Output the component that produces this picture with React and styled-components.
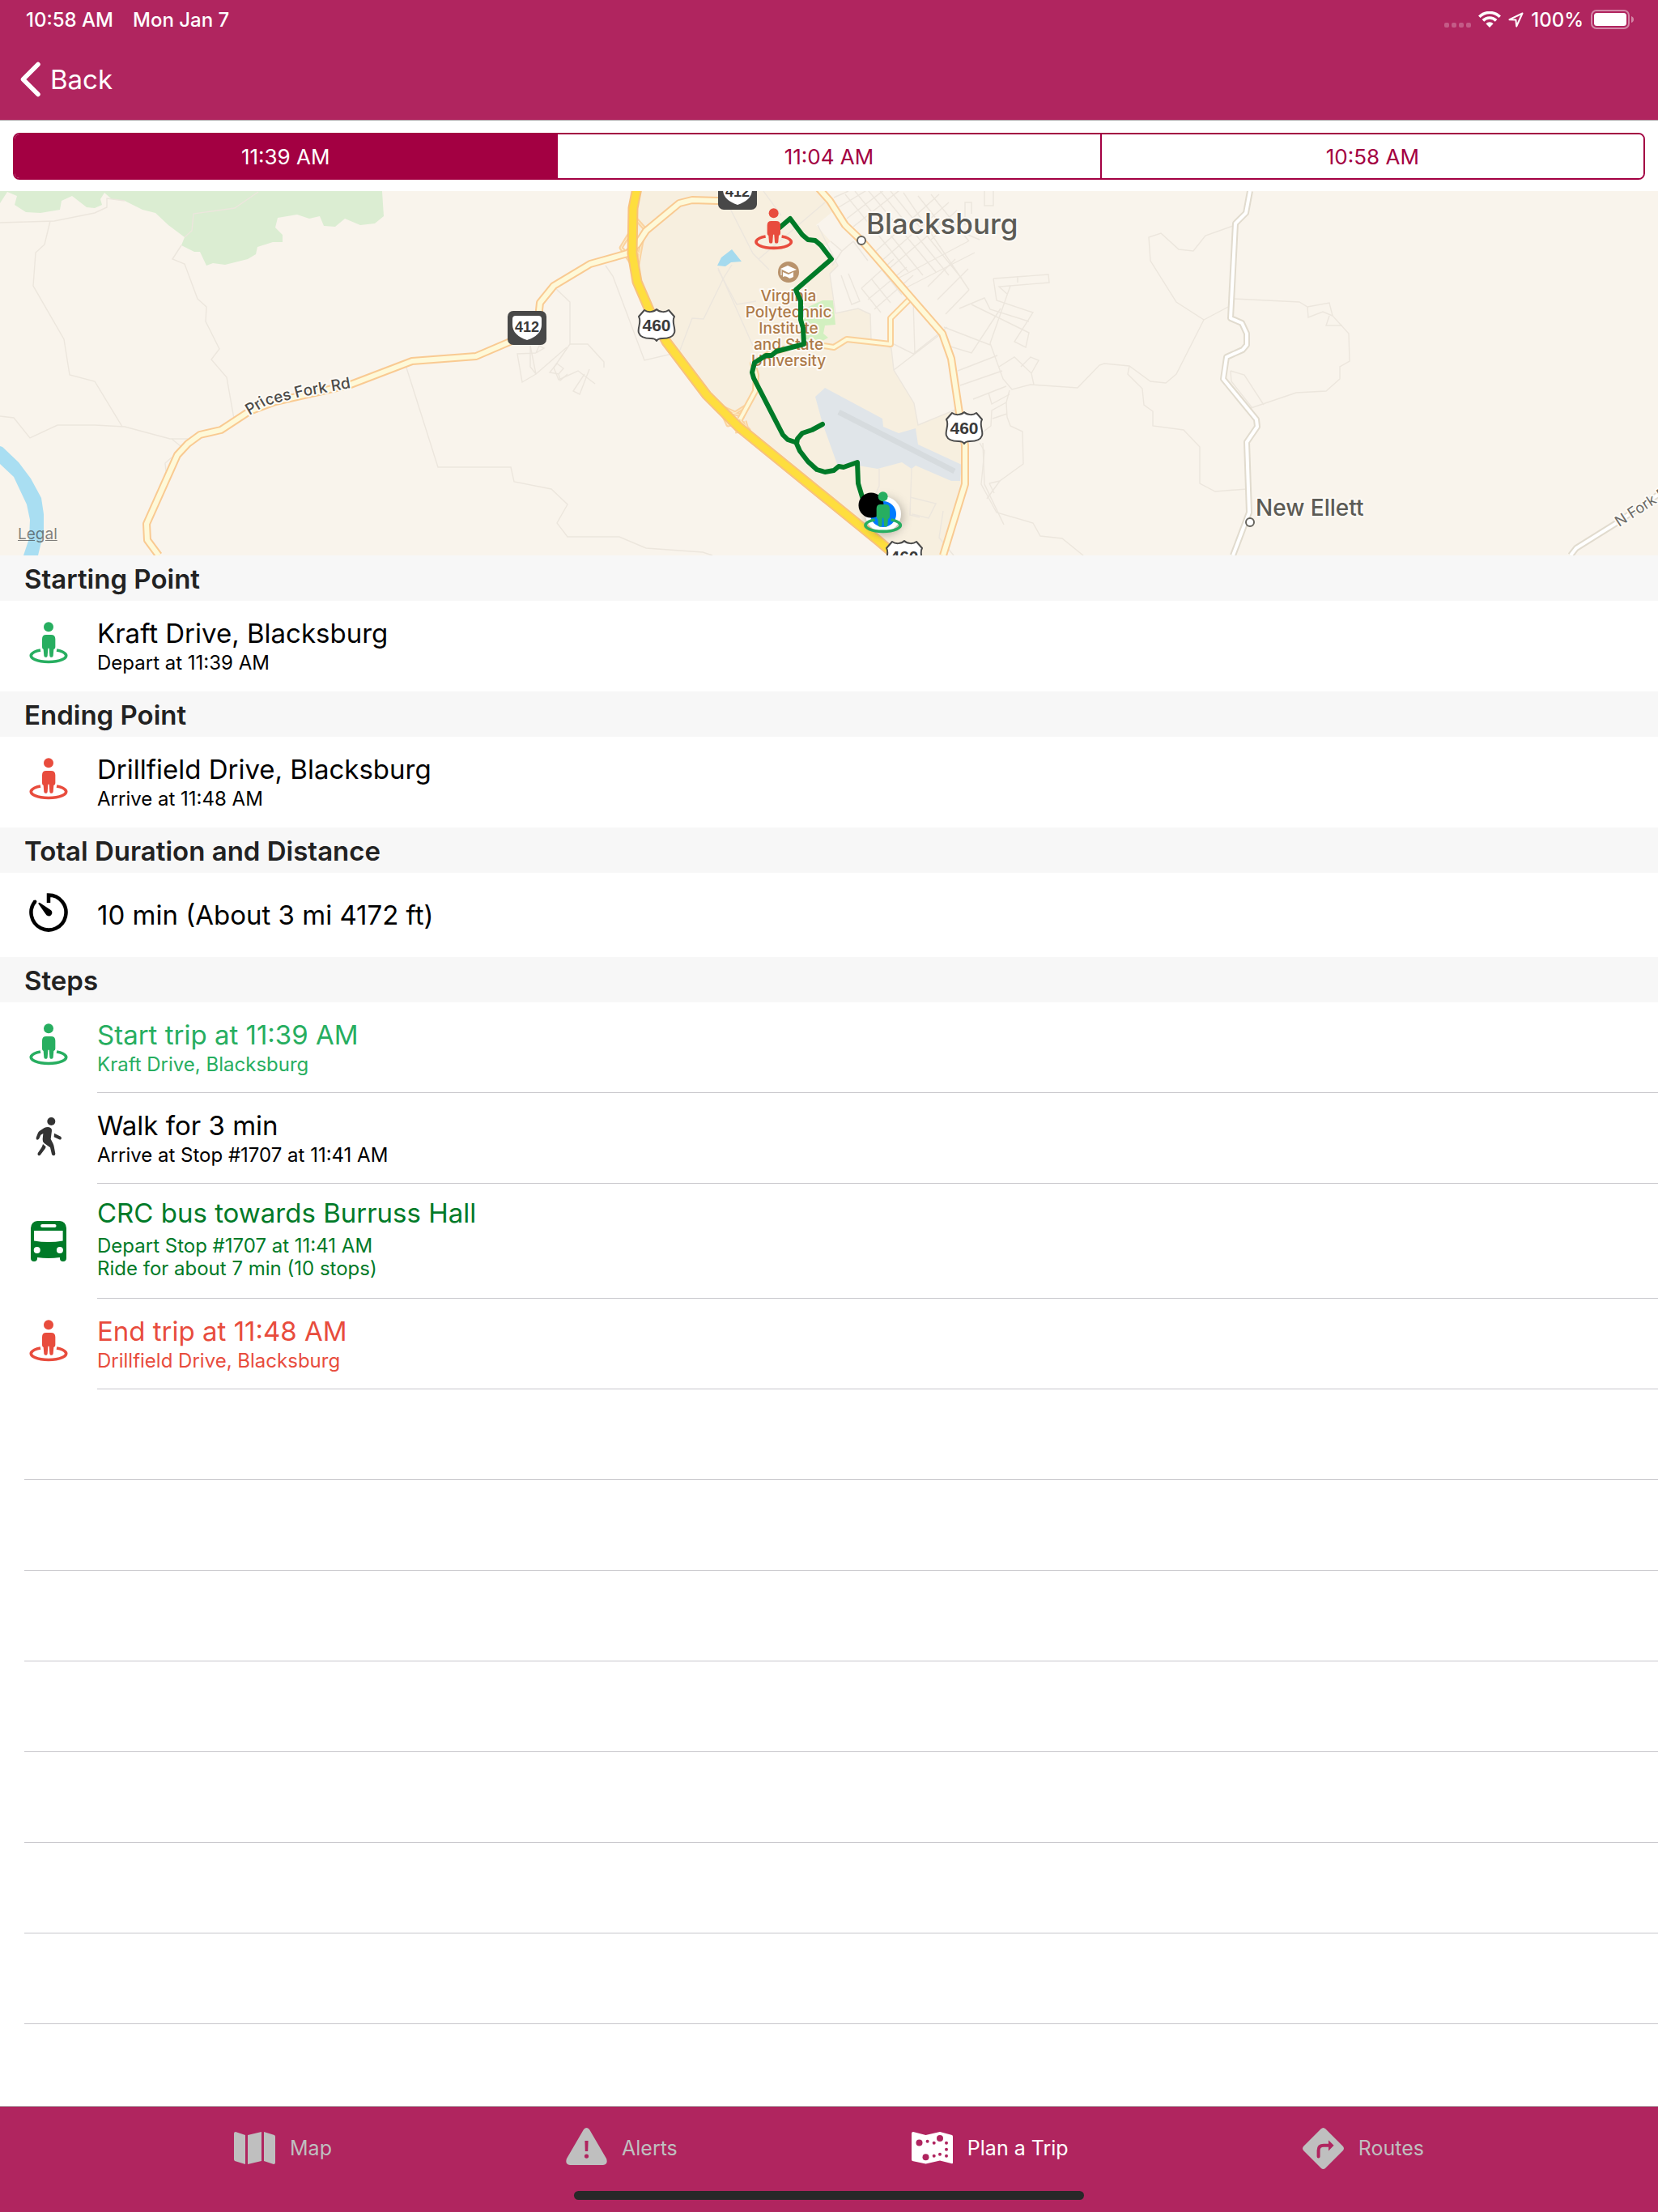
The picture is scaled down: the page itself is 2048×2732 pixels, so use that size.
import React, { useState } from "react";
import styled, { createGlobalStyle } from "styled-components";

const GlobalStyle = createGlobalStyle`
  * {
    box-sizing: border-box;
  }

  body {
    margin: 0;
    background-color: #fff;
    color: #000;
    font-family: Inter, "Liberation Sans", sans-serif;
  }
`;

const Page = styled.div`
  display: flex;
  flex-direction: column;
  min-height: 100vh;
`;

/* ---------- header ---------- */

const Header = styled.header`
  background-color: #b0255f;
  border-bottom: 1px solid #b2a6ab;
  color: #fff;
`;

const StatusBar = styled.div`
  display: flex;
  align-items: center;
  justify-content: space-between;
  height: 48px;
  padding: 0 30px 0 32px;
  font-size: 24px;
  font-weight: 500;
`;

const StatusGroup = styled.div`
  display: flex;
  align-items: center;
  gap: ${(props) => props.$gap}px;
`;

const NavBar = styled.nav`
  display: flex;
  align-items: center;
  height: 100px;
  padding: 0 25px;
`;

const BackButton = styled.button`
  display: flex;
  align-items: center;
  gap: 12px;
  padding: 0;
  border: 0;
  background: none;
  color: inherit;
  font: inherit;
  font-size: 33px;
  cursor: pointer;
`;

/* ---------- departure picker ---------- */

const Segments = styled.div`
  display: flex;
  margin: 15px 16px 14px;
  height: 58px;
  border: 2px solid #a30042;
  border-radius: 8px;
  overflow: hidden;
`;

const Segment = styled.button`
  flex: 1;
  border: 0;
  background-color: ${(props) => (props.$active ? "#a30042" : "#fff")};
  color: ${(props) => (props.$active ? "#fff" : "#a30042")};
  font: inherit;
  font-size: 26px;
  cursor: pointer;

  & + & {
    border-left: 2px solid #a30042;
  }
`;

/* ---------- map ---------- */

const MapFrame = styled.section`
  position: relative;
  height: 450px;
  overflow: hidden;
  background-color: #f9f4ec;

  svg.map {
    display: block;
    width: 100%;
    height: 100%;
  }
`;

const LegalLink = styled.a`
  position: absolute;
  left: 22px;
  bottom: 14px;
  color: rgba(60, 60, 60, 0.65);
  font-size: 19px;
  line-height: 24px;
`;

const MapLabel = styled.text`
  font-family: Inter, "Liberation Sans", sans-serif;
  font-size: ${(props) => props.$size}px;
  font-weight: ${(props) => props.$weight || 500};
  fill: ${(props) => props.$color || "#5c5b55"};
  stroke: #fdfaf5;
  stroke-width: 4px;
  stroke-linejoin: round;
  paint-order: stroke;
`;

const ShieldNumber = styled.text`
  font-family: "Liberation Sans", sans-serif;
  font-size: ${(props) => props.$size}px;
  font-weight: 700;
  text-anchor: middle;
  fill: #3a3a3a;
`;

/* ---------- trip list ---------- */

const Main = styled.main`
  flex: 1;
`;

const SectionTitle = styled.h2`
  margin: 0;
  padding: 1px 30px 0;
  height: 56px;
  background-color: #f7f7f7;
  color: #222;
  font-size: 33px;
  font-weight: 600;
  line-height: 56px;
`;

const List = styled.ul`
  margin: 0;
  padding: 0;
  list-style: none;
`;

const Item = styled.li`
  display: flex;
  min-height: ${(props) => props.$height}px;
  color: ${(props) => props.$color || "#000"};
`;

const IconCell = styled.div`
  display: flex;
  flex: none;
  align-items: center;
  justify-content: center;
  width: 120px;
`;

const ItemBody = styled.div`
  display: flex;
  flex: 1;
  flex-direction: column;
  justify-content: center;
  gap: ${(props) => (props.$tall ? 7 : 3)}px;
  padding-bottom: ${(props) => (props.$tall ? 6 : 0)}px;
  border-bottom: 1px solid ${(props) => (props.$line ? "#c8c7cc" : "transparent")};
`;

const ItemTitle = styled.div`
  font-size: 33px;
  line-height: 40px;
`;

const ItemDetail = styled.div`
  font-size: 24px;
  line-height: 28px;
`;

const EmptyRow = styled.div`
  height: 112px;
  margin-left: 30px;
  border-bottom: 1px solid #c8c7cc;
`;

/* ---------- tab bar ---------- */

const TabBar = styled.footer`
  display: flex;
  flex-direction: column;
  align-items: center;
  justify-content: space-between;
  height: 131px;
  padding-bottom: 15px;
  border-top: 1px solid #b2a6ab;
  background-color: #b0255f;
`;

const Tabs = styled.nav`
  display: flex;
  align-items: center;
  justify-content: space-evenly;
  width: 100%;
  height: 102px;
`;

const Tab = styled.a`
  display: flex;
  align-items: center;
  gap: 18px;
  color: ${(props) => (props.$active ? "#fff" : "#bfbfbf")};
  font-size: 25px;
  text-decoration: none;
`;

const HomeIndicator = styled.div`
  width: 630px;
  max-width: 60%;
  height: 11px;
  border-radius: 6px;
  background-color: #282828;
`;

/* ---------- icons ---------- */

const PersonShape = () => (
  <g fill="currentColor">
    <circle cx="71" cy="19" r="18" />
    <path d="M62 48H80Q96 48 96 64V94Q96 101 90 102L88 126Q87 131 83 131H79Q76 131 75 126L73 98H69L67 126Q66 131 63 131H59Q55 131 54 126L52 102Q47 101 47 94V64Q47 48 62 48Z" />
    <path
      d="M41 105A65 23 0 1 0 101 105"
      fill="none"
      stroke="currentColor"
      strokeWidth="11"
    />
  </g>
);

const PersonIcon = () => (
  <svg width="48" height="60" viewBox="-1 0 144 180" aria-hidden="true">
    <PersonShape />
  </svg>
);

const TimerIcon = () => (
  <svg width="48" height="54" viewBox="0 0 48 54" aria-hidden="true">
    <path
      d="M24 12V2.5A21.5 21.5 0 1 1 7.5 10.2"
      fill="none"
      stroke="#000"
      strokeWidth="4.5"
      strokeLinecap="butt"
      strokeLinejoin="miter"
    />
    <circle cx="7.3" cy="10.6" r="2.1" />
    <path d="M11.5 12.2Q12.5 11.4 14 12.4L26 20.4A4.2 4.2 0 1 1 20.4 26L12 14Q11 13 11.5 12.2Z" />
  </svg>
);

const WalkIcon = () => (
  <svg width="33" height="52" viewBox="0 0 99 156" aria-hidden="true">
    <g fill="#333">
      <circle cx="58" cy="15" r="15" />
      <path d="M2 75L9 57Q11 52 15 50L32 39Q38 36 46 36Q61 38 60 50L56 80L64 96Q67 102 68 108L73 134Q73 141 68 142Q62 142 60 137L54 112L32 96Q25 90 26 81L28 60L19 65L13 79Q10 84 5 83Q1 81 2 75Z" />
      <path d="M27 99L38 109Q37 113 35 116L18 139Q15 143 10 141Q6 139 8 133L22 112Q25 107 27 99Z" />
      <path d="M69 59L93 71Q98 75 95 80Q92 84 87 82L68 73Z" />
    </g>
  </svg>
);

const BusIcon = () => (
  <svg width="44" height="50" viewBox="0 0 131 149" aria-hidden="true">
    <path
      fill="currentColor"
      fillRule="evenodd"
      d="M24 0H107Q129 2 131 26V137Q131 149 119 149T107 137V134Q65 140 24 134V137Q24 149 12 149T0 137V26Q2 2 24 0ZM42 12Q36 12 36 18T42 24H88Q94 24 94 18T88 12ZM12 36V73Q65 82 118 73V36ZM23 95A12 12 0 1 0 23 119A12 12 0 1 0 23 95ZM107 95A12 12 0 1 0 107 119A12 12 0 1 0 107 95Z"
    />
  </svg>
);

const MapTabIcon = () => (
  <svg width="51" height="40" viewBox="0 0 51 40" fill="currentColor" aria-hidden="true">
    <path d="M0 2Q0 0 2 0L14 4V40L1 36Q0 35 0 34Z" />
    <path d="M17 4L34 0V36L17 40Z" />
    <path d="M37 0L50 4Q51 5 51 6V38Q51 40 49 40L37 36Z" />
  </svg>
);

const AlertsTabIcon = () => (
  <svg width="51" height="50" viewBox="0 0 51 50" fill="currentColor" aria-hidden="true">
    <path
      fillRule="evenodd"
      d="M22 2Q25.5 -2 29 2L50 38Q52.5 45 46 46H5Q-1.5 45 1 38ZM23.4 16L23.8 29H27.2L27.6 16ZM25.5 32.5A2.6 2.6 0 1 0 25.5 37.7A2.6 2.6 0 1 0 25.5 32.5Z"
    />
  </svg>
);

const TRIP_DOTS = [
  [9.5, 13.5, 4],
  [19.6, 11.7, 2],
  [27.7, 13.7, 2],
  [35, 8, 4],
  [43, 13.7, 2],
  [43, 21.7, 2],
  [43, 29.7, 2],
  [35, 27.7, 2],
  [27.7, 29.7, 2],
  [17.5, 31.3, 4],
];

const TripTabIcon = () => (
  <svg width="51" height="40" viewBox="0 0 51 40" fill="currentColor" aria-hidden="true">
    <path d="M0 2Q0 0 2 0L17.5 4L35 0L50 4Q51 4.5 51 6V38Q51 40 49 39L35 35.5L17.5 39.5L1 36Q0 35.5 0 34Z" />
    {TRIP_DOTS.map(([cx, cy, r]) => (
      <circle key={`${cx}-${cy}`} cx={cx} cy={cy} r={r} fill="#b0255f" />
    ))}
  </svg>
);

const RoutesTabIcon = () => (
  <svg width="51" height="51" viewBox="0 0 51 51" fill="currentColor" aria-hidden="true">
    <path d="M22.5 1.5Q25.5 -1.5 28.5 1.5L49.5 22.5Q52.5 25.5 49.5 28.5L28.5 49.5Q25.5 52.5 22.5 49.5L1.5 28.5Q-1.5 25.5 1.5 22.5Z" />
    <path
      d="M19.6 35.5V28Q19.6 21.8 26 21.8H32"
      fill="none"
      stroke="#b0255f"
      strokeWidth="4"
      strokeLinecap="round"
    />
    <path d="M32 15.3L38.6 21.8L32 28.5Z" fill="#b0255f" />
  </svg>
);

const ChevronIcon = () => (
  <svg width="25" height="44" viewBox="0 0 25 44" aria-hidden="true">
    <path
      d="M22 3.5L3.5 22L22 40.5"
      fill="none"
      stroke="#fff"
      strokeWidth="5.5"
      strokeLinecap="round"
      strokeLinejoin="round"
    />
  </svg>
);

const SignalIcon = () => (
  <svg width="33" height="20" viewBox="0 0 33 20" fill="#fff" fillOpacity="0.25" aria-hidden="true">
    <rect x="0" y="14" width="6" height="6" rx="2" />
    <rect x="9" y="14" width="6" height="6" rx="2" />
    <rect x="18" y="14" width="6" height="6" rx="2" />
    <rect x="27" y="14" width="6" height="6" rx="2" />
  </svg>
);

const WifiIcon = () => (
  <svg width="28" height="20" viewBox="0 0 28 20" aria-hidden="true">
    <g fill="none" stroke="#fff" strokeWidth="3.6">
      <path d="M1.3 6.8A18 18 0 0 1 26.7 6.8" />
      <path d="M5.9 11.4A11.5 11.5 0 0 1 22.1 11.4" />
    </g>
    <path d="M14 20L9.4 15.2A6.5 6.5 0 0 1 18.6 15.2Z" fill="#fff" />
  </svg>
);

const LocationIcon = () => (
  <svg width="19" height="19" viewBox="0 0 19 19" aria-hidden="true">
    <path
      d="M17.5 1.5L1.5 9.2L9.4 9.6L10.2 17.5Z"
      fill="none"
      stroke="#fff"
      strokeWidth="2"
      strokeLinejoin="round"
    />
  </svg>
);

const BatteryIcon = () => (
  <svg width="53" height="24" viewBox="0 0 53 24" aria-hidden="true">
    <rect x="1" y="1" width="46" height="22" rx="6" fill="none" stroke="#fff" strokeOpacity="0.45" strokeWidth="2" />
    <rect x="4" y="4" width="40" height="16" rx="3.5" fill="#fff" />
    <path d="M50 8Q53 9 53 12T50 16Z" fill="#fff" fillOpacity="0.45" />
  </svg>
);

/* ---------- map drawing ---------- */

const BACK_ROADS = [
  "M0 39L67 37L117 27L132 20V9L154 12",
  "M62 37L55 66L44 76L41 117L79 183L86 227L117 235L151 291",
  "M224 67L213 84L228 90L244 133L255 143L254 161L271 195L261 208L280 230L289 281",
  "M319 1L290 21L239 28L237 49L228 57",
  "M0 278L17 280L37 305L71 289H117L154 291L210 306H232",
  "M212 306L223 315M212 329L204 336L205 346",
  "M502 218L541 341H631L635 359L681 368L701 387L688 410L701 427H765L798 441L868 446L880 450",
  "M655 191V217L662 226L700 193M655 191L662 226M662 200L639 201L645 236L662 226M662 200L666 191L672 194L662 200",
  "M679 224L688 213L696 219L690 226ZM690 226L692 234L701 226",
  "M686 120L704 137V189H726L746 211V218M704 189L684 218L690 233L714 222L735 238M722 226L708 247L716 251L728 220",
  "M748 92L757 105L796 209L839 199L855 157L869 158L894 107L904 91",
  "M887 97L910 140L934 136",
  "M898 14L930 77L950 97M937 84L1019 14M887 95L930 191",
  "M943 0L965 30",
  "M1010 42L1035 92L1025 102L1032 151L1060 145L1075 152L1076 183L1101 194L1104 221L1129 262L1134 289L1185 268",
  "M1086 343V364L1075 388M1126 343L1124 400L1136 403M1124 378L1156 386L1147 404L1127 399",
  "M1165 395L1160 428L1178 450M1214 311L1216 362L1240 412",
  "M1227 108L1295 103L1296 113L1234 118L1244 127M1227 108L1231 135L1276 150L1253 186L1267 193L1271 175L1200 140M1257 105V113",
  "M1185 145L1216 132L1223 146L1271 161M1166 168L1223 190M1174 192L1200 200L1236 145M1183 222L1232 203M1186 240L1238 222",
  "M1202 257L1243 241M1221 249L1225 263L1247 251M1234 217L1253 205L1274 225L1277 239M1261 217L1273 205L1283 209L1274 225",
  "M1247 246L1243 261L1244 279L1248 290L1263 297L1264 337L1235 358L1219 380M1243 261L1225 271L1224 290L1215 297M1226 281L1244 275",
  "M1210 311L1216 321L1212 362L1231 397L1276 410L1285 426L1312 429L1338 450M1222 361L1235 358M1222 361L1228 373",
  "M1248 117L1223 188L1239 232L1250 245L1273 239L1331 243L1358 215L1364 213L1395 216L1421 235L1440 237L1453 226L1487 159",
  "M1523 43L1489 55L1474 74L1456 72L1434 52L1419 57L1421 86L1453 137L1487 159L1519 142",
  "M1395 216L1393 226L1411 244L1413 264L1424 272V290L1462 295L1482 316V361L1501 371L1540 368",
  "M1523 133L1605 137L1615 143L1642 138L1646 154L1666 176L1667 210L1655 217V232L1638 247L1601 249L1545 268",
  "M1615 143L1616 156L1634 149L1646 154M1642 154L1638 166H1658M1520 222L1537 227L1561 264M1520 222L1521 235L1547 268",
  "M1216 0V18H1227V0M1192 42V14H1200V28M1186 50L1210 60",
];

const TOWN_GRID = [
  "M1030 8L1048 0M1036 20L1082 -8M1046 34L1106 -12M1054 44L1120 -8M1080 76L1160 4M1088 87L1172 14M1096 98L1182 24M1105 110L1196 62M1114 122L1204 76",
  "M1044 4L1122 100M1056 0L1140 104M1068 -6L1156 100M1084 -4L1172 104M1100 0L1188 108M1116 2L1197 122M1134 6L1166 46M1150 4L1197 62M1166 46L1150 60",
  "M1064 120L1104 84M1072 134L1120 94M1080 146L1128 104M1064 120L1088 150M1076 108L1100 138M1090 98L1114 128",
  "M1039 104L1052 140L1062 136L1048 102M1026 62L1040 74L1054 62M1040 74L1028 92M1054 62L1072 86",
  "M1197 122L1168 152M1196 96L1158 134M1180 84L1146 118",
  "M1128 134L1130 201M1104 189L1128 201L1170 168M1104 221L1160 178",
];

const PALE_ROADS = [
  "M196 450L182 431L181 411L219 326L232 312L247 301L273 295L308 272L340 260L433 239L509 210L588 204L630 186L666 160V147L667 138L684 117L729 90L775 77L787 66L798 49L839 15L855 11L887 12L920 8",
  "M1009 -6L1025 12L1044 42L1064 61L1164 176L1175 207L1185 274L1192 314V362L1165 450",
];

const SMALL_PALE_ROADS = [
  "M1125 132L1100 157V189L1046 183L1030 193L992 187L950 201L930 213L934 227L933 247L914 282",
];

const RAMPS = [
  "M774 77L767 70L778 52L787 36L796 46M767 70L782 92M796 46L790 78L787 96M790 78L778 64",
  "M888 265L908 274L919 267L915 284L925 295L908 297M888 265L899 289L912 286M920 284L924 298M904 274L920 278",
];

const WHITE_ROADS = [
  "M1544 0L1539 27L1526 40L1520 157L1534 163L1540 176V190L1535 196L1515 205L1511 232L1552 282L1553 291L1540 310L1543 397L1523 450",
  "M1940 450L1947 441L1995 411L2048 375",
];

const HIGHWAY =
  "M787 -4L782 21L781 77L787 112L803 149L823 186L873 252L912 291L1084 431L1130 470";

const Road = ({ paths, casing, fill, width }) => (
  <g fill="none" strokeLinejoin="round">
    {paths.map((d) => (
      <path key={d} d={d} stroke={casing} strokeWidth={width + 4} />
    ))}
    {paths.map((d) => (
      <path key={d} d={d} stroke={fill} strokeWidth={width} />
    ))}
  </g>
);

const StateShield = ({ x, y }) => (
  <g transform={`translate(${x} ${y})`}>
    <rect width="48" height="42" rx="7" fill="#484848" />
    <path d="M10 6H38Q42 6 42 10V17Q42 30 24 36Q6 30 6 17V10Q6 6 10 6Z" fill="#fff" />
    <ShieldNumber x="24" y="26" $size={18}>
      412
    </ShieldNumber>
  </g>
);

const UsShield = ({ x, y }) => (
  <g transform={`translate(${x} ${y})`}>
    <path
      d="M9 2C13 5 20 5 24 1C28 5 35 5 39 2L46 10C42 17 48 24 46 30C44 36 37 37 31 37C27 37 25 38 24 40C23 38 21 37 17 37C11 37 4 36 2 30C0 24 6 17 2 10Z"
      fill="#fff"
      stroke="#4a4a4a"
      strokeWidth="2"
      strokeLinejoin="round"
    />
    <ShieldNumber x="24" y="28" $size={21}>
      460
    </ShieldNumber>
  </g>
);

const TownDot = ({ x, y }) => (
  <circle cx={x} cy={y} r="5" fill="#fff" stroke="#66645e" strokeWidth="2" />
);

const CAMPUS_NAME = ["Virginia", "Polytechnic", "Institute", "and State", "University"];

const TripMap = () => (
  <MapFrame aria-label="Trip map">
    <svg
      className="map"
      viewBox="0 0 2048 450"
      preserveAspectRatio="xMidYMid slice"
      role="img"
      aria-label="Bus route through Blacksburg"
    >
      <defs>
        <path id="prices-fork" d="M308 277L328 265L371 254L440 242" />
        <filter id="soft" x="-50%" y="-50%" width="200%" height="200%">
          <feGaussianBlur stdDeviation="6" />
        </filter>
      </defs>

      <path
        fill="#dbedd2"
        d="M0 0V15L9 1L21 6L18 17L32 26L50 27L74 23L76 12L89 6L107 20L117 21L126 17L124 10L129 2L138 10L154 12L176 23L192 27L208 42L228 57L224 67L240 75H247L255 92L263 89L278 91L306 84L316 78L318 69L337 63H349V54L340 45L343 33L367 29L382 34L395 31L400 43L414 44L426 34L445 42L463 40L474 31L472 0Z"
      />
      <path
        fill="#a9def2"
        d="M0 337L17 353L33 387L37 406L36 429L29 450H47L54 421V399L51 379L38 355L23 335L3 316L0 315Z"
      />
      <path
        fill="#f7efdf"
        d="M790 0H1011L1029 25L1008 42L1026 62L1014 73L1035 92L1025 102L1032 151L1060 145L1075 152L1076 183L1101 194L1104 221L1129 262L1134 289L1185 268L1192 314V362L1165 450H1110L912 291L873 252L823 186L803 149L787 112L781 77V21Z"
      />
      <path
        fill="#d2f0c0"
        d="M992 146L1016 135H1029L1032 165L1019 166L1017 176L1023 181L1016 185L992 184Z"
      />
      <path fill="#a5daee" d="M904 72L916 87L903 88L896 93L886 92L891 82Z" />
      <path
        fill="#e0e5e9"
        d="M1019 243L1090 281L1091 291L1110 299L1131 293L1134 313L1188 338L1186 358H1175L1131 339L1126 343L1114 335L1084 343L1048 337H1034L1016 287L1007 254Z"
      />
      <path d="M1036 273L1179 346" stroke="#d6dbde" strokeWidth="7" />

      <g fill="none" stroke="#ece6dd" strokeWidth="1.4">
        {[...BACK_ROADS, ...TOWN_GRID].map((d) => (
          <path key={d} d={d} />
        ))}
      </g>

      <Road paths={RAMPS} casing="#fad3a0" fill="#fdf0cd" width={1} />
      <Road paths={WHITE_ROADS} casing="#e1dbce" fill="#fff" width={4} />
      <Road paths={SMALL_PALE_ROADS} casing="#fad09a" fill="#fef9d8" width={4} />
      <Road paths={PALE_ROADS} casing="#f9ca92" fill="#fef9d8" width={6} />
      <Road paths={[HIGHWAY]} casing="#f8c27c" fill="#fede3e" width={9} />

      <StateShield x={627} y={148} />
      <StateShield x={887} y={-19} />
      <UsShield x={787} y={145} />
      <UsShield x={1167} y={272} />
      <UsShield x={1093} y={431} />

      <TownDot x={1064} y={61} />
      <TownDot x={1544} y={409} />
      <MapLabel x="1070" y="53" $size={35}>
        Blacksburg
      </MapLabel>
      <MapLabel x="1551" y="401" $size={28}>
        New Ellett
      </MapLabel>
      <MapLabel $size={19} $color="#4c4b48">
        <textPath href="#prices-fork">Prices Fork Rd</textPath>
      </MapLabel>
      <MapLabel
        $size={18}
        $weight={400}
        $color="#6b6a66"
        transform="translate(2000 415) rotate(-33)"
      >
        N Fork Rd
      </MapLabel>

      <circle cx="974" cy="100" r="13" fill="#b9936c" />
      <path d="M964 96L973 92L984 97L974 101Z" fill="#fff" />
      <path d="M967 100L974 103L980 100V106Q975 109 974 107Q970 104 967 106Z" fill="#fff" />
      <path d="M965 97V104" stroke="#fff" />
      {CAMPUS_NAME.map((line, i) => (
        <MapLabel
          key={line}
          x="974"
          y={136 + i * 20}
          textAnchor="middle"
          $size={19}
          $color="#ad7a49"
        >
          {line}
        </MapLabel>
      ))}

      <g
        fill="none"
        stroke="#007a28"
        strokeWidth="6"
        strokeLinecap="round"
        strokeLinejoin="round"
      >
        <path d="M962 46L976 34L991 54L998 60L1007 61L1014 67L1027 84L983 122L989 136V159L992 169L993 189L959 198L953 203H946L932 212L929 224L931 231L967 301L973 307L982 310L984 309" />
        <path d="M1016 288L1003 295L991 299L985 306L984 312L988 321L998 334L1009 344L1019 347L1030 345L1036 340L1042 341L1059 335L1060 361L1066 381" />
      </g>

      <circle cx="1093" cy="402" r="23" fill="#000" fillOpacity="0.25" filter="url(#soft)" />
      <circle cx="1091" cy="399" r="22" fill="#fff" />
      <circle cx="1091" cy="399" r="16" fill="#007aff" />
      <circle cx="1076" cy="388" r="15.5" />
      <g transform="translate(1067 371) scale(0.333)" color="#27ae60">
        <PersonShape />
      </g>
      <g transform="translate(932 21) scale(0.333)" color="#e84c3d">
        <PersonShape />
      </g>
    </svg>
    <LegalLink href="#legal">Legal</LegalLink>
  </MapFrame>
);

/* ---------- screen ---------- */

const DEPARTURES = ["11:39 AM", "11:04 AM", "10:58 AM"];

const STEPS = [
  {
    icon: <PersonIcon />,
    color: "#27ae60",
    title: "Start trip at 11:39 AM",
    details: ["Kraft Drive, Blacksburg"],
  },
  {
    icon: <WalkIcon />,
    title: "Walk for 3 min",
    details: ["Arrive at Stop #1707 at 11:41 AM"],
  },
  {
    icon: <BusIcon />,
    color: "#007a28",
    title: "CRC bus towards Burruss Hall",
    details: ["Depart Stop #1707 at 11:41 AM", "Ride for about 7 min (10 stops)"],
  },
  {
    icon: <PersonIcon />,
    color: "#e84c3d",
    title: "End trip at 11:48 AM",
    details: ["Drillfield Drive, Blacksburg"],
  },
];

const TABS = [
  { label: "Map", icon: <MapTabIcon /> },
  { label: "Alerts", icon: <AlertsTabIcon /> },
  { label: "Plan a Trip", icon: <TripTabIcon />, active: true },
  { label: "Routes", icon: <RoutesTabIcon /> },
];

const IconTint = styled.span`
  display: flex;
  color: ${(props) => props.$color || "inherit"};
`;

const Row = ({ icon, iconColor, color, title, details = [], height = 112, line }) => {
  const tall = details.length > 1;

  return (
    <Item $height={tall ? 142 : height} $color={color}>
      <IconCell>
        <IconTint $color={iconColor}>{icon}</IconTint>
      </IconCell>
      <ItemBody $tall={tall} $line={line}>
        <ItemTitle>{title}</ItemTitle>
        {details.length > 0 && (
          <div>
            {details.map((text) => (
              <ItemDetail key={text}>{text}</ItemDetail>
            ))}
          </div>
        )}
      </ItemBody>
    </Item>
  );
};

const App = () => {
  const [departure, setDeparture] = useState(DEPARTURES[0]);

  return (
    <Page>
      <GlobalStyle />
      <Header>
        <StatusBar>
          <StatusGroup $gap={24}>
            <span>10:58 AM</span>
            <span>Mon Jan 7</span>
          </StatusGroup>
          <StatusGroup $gap={9}>
            <SignalIcon />
            <WifiIcon />
            <LocationIcon />
            <span>100%</span>
            <BatteryIcon />
          </StatusGroup>
        </StatusBar>
        <NavBar>
          <BackButton type="button">
            <ChevronIcon />
            Back
          </BackButton>
        </NavBar>
      </Header>

      <Main>
        <Segments role="group" aria-label="Departure time">
          {DEPARTURES.map((time) => (
            <Segment
              key={time}
              type="button"
              $active={time === departure}
              aria-pressed={time === departure}
              onClick={() => setDeparture(time)}
            >
              {time}
            </Segment>
          ))}
        </Segments>

        <TripMap />

        <SectionTitle>Starting Point</SectionTitle>
        <List>
          <Row
            icon={<PersonIcon />}
            iconColor="#27ae60"
            title="Kraft Drive, Blacksburg"
            details={["Depart at 11:39 AM"]}
          />
        </List>

        <SectionTitle>Ending Point</SectionTitle>
        <List>
          <Row
            icon={<PersonIcon />}
            iconColor="#e84c3d"
            title="Drillfield Drive, Blacksburg"
            details={["Arrive at 11:48 AM"]}
          />
        </List>

        <SectionTitle>Total Duration and Distance</SectionTitle>
        <List>
          <Row icon={<TimerIcon />} title="10 min (About 3 mi 4172 ft)" height={104} />
        </List>

        <SectionTitle>Steps</SectionTitle>
        <List>
          {STEPS.map((step) => (
            <Row key={step.title} {...step} line />
          ))}
        </List>
        {Array.from({ length: 7 }, (_, i) => (
          <EmptyRow key={i} />
        ))}
      </Main>

      <TabBar>
        <Tabs>
          {TABS.map((tab) => (
            <Tab
              key={tab.label}
              href="#"
              $active={tab.active}
              aria-current={tab.active ? "page" : undefined}
            >
              {tab.icon}
              {tab.label}
            </Tab>
          ))}
        </Tabs>
        <HomeIndicator />
      </TabBar>
    </Page>
  );
};

export default App;
